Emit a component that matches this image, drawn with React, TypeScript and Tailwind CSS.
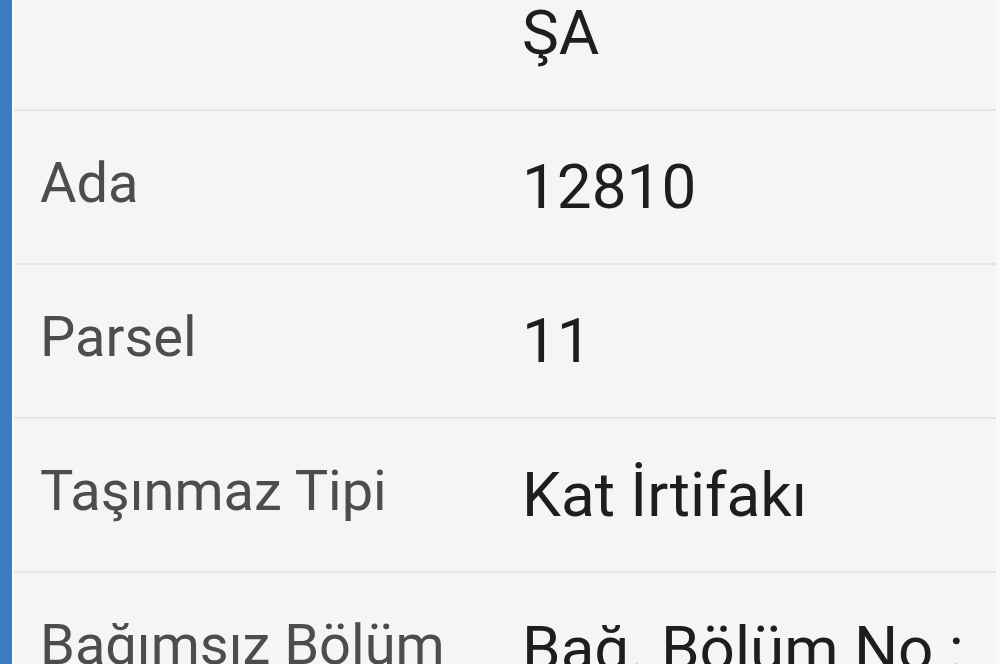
import { JSX } from "react";

type Row = { label: string; value: string };

const rows: Row[] = [
  { label: "", value: "ŞA" },
  { label: "Ada", value: "12810" },
  { label: "Parsel", value: "11" },
  { label: "Taşınmaz Tipi", value: "Kat İrtifakı" },
  { label: "Bağımsız Bölüm", value: "Bağ. Bölüm No :" },
];

const App = (): JSX.Element => {
  return (
    <div
      className="flex h-[664px] w-[1000px] overflow-hidden bg-[#f4f5f7]"
      style={{ fontFamily: "Roboto, 'Noto Sans', sans-serif" }}
    >
      <div className="w-[12px] shrink-0 bg-[#3b7cc0]" />
      <div className="w-[2px] shrink-0 bg-[#fbfcfd]" />
      <section className="-mt-[43px] flex flex-1 flex-col border-r-[4px] border-[#f8f9fa]">
        {rows.map((row, i) => (
          <div
            key={i}
            className="flex h-[154px] shrink-0 items-center border-b-2 border-[#e4e5e7] pb-2 leading-none"
          >
            <p className="w-[508px] shrink-0 pl-[26px] text-[56px] text-[#4d4d4d]">
              {row.label}
            </p>
            <p className="mt-2 whitespace-nowrap text-[62px] text-[#1e1e1e]">
              {row.value}
            </p>
          </div>
        ))}
      </section>
    </div>
  );
};

export default App;
